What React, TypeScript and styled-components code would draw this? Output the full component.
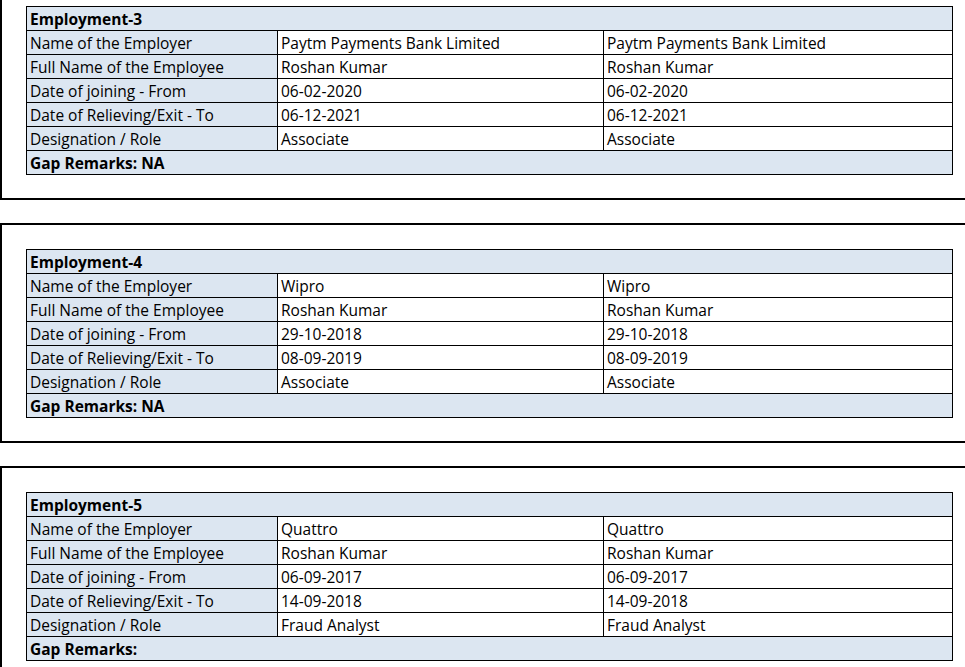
import React from 'react';
import styled, { createGlobalStyle } from 'styled-components';

const GlobalStyle = createGlobalStyle`
  html,
  body {
    margin: 0;
    padding: 0;
    overflow: hidden;
    background: #ffffff;
  }
`;

const Page = styled.main`
  margin-top: -20px;
  font-family: 'Open Sans', 'Noto Sans', sans-serif;
  font-size: 15.5px;
  color: #000000;
`;

const Panel = styled.section`
  border: 2px solid #000000;
  border-right: none;
  padding: 24px 0 23px 24px;
  margin-bottom: 23px;
`;

const Sheet = styled.div`
  display: grid;
  grid-template-columns: 251px 326px 349px;
  width: max-content;
  border-top: 1px solid #000000;
  border-left: 1px solid #000000;
`;

type Tone = 'label' | 'value' | 'title';

const Cell = styled.div<{ $tone: Tone; $wide?: boolean }>`
  box-sizing: border-box;
  height: 24px;
  line-height: 23px;
  padding: 1px 3px 0 3px;
  border-right: 1px solid #000000;
  border-bottom: 1px solid #000000;
  white-space: nowrap;
  overflow: hidden;
  background: ${p => (p.$tone === 'value' ? '#ffffff' : '#dce6f1')};
  font-weight: ${p => (p.$tone === 'title' ? 700 : 400)};
  grid-column: ${p => (p.$wide ? '1 / -1' : 'auto')};
`;

type Employment = {
  index: number;
  employer: string;
  employee: string;
  from: string;
  to: string;
  role: string;
  remarks: string;
};

const employments: Employment[] = [
  {
    index: 3,
    employer: 'Paytm Payments Bank Limited',
    employee: 'Roshan Kumar',
    from: '06-02-2020',
    to: '06-12-2021',
    role: 'Associate',
    remarks: 'NA',
  },
  {
    index: 4,
    employer: 'Wipro',
    employee: 'Roshan Kumar',
    from: '29-10-2018',
    to: '08-09-2019',
    role: 'Associate',
    remarks: 'NA',
  },
  {
    index: 5,
    employer: 'Quattro',
    employee: 'Roshan Kumar',
    from: '06-09-2017',
    to: '14-09-2018',
    role: 'Fraud Analyst',
    remarks: '',
  },
];

const EmploymentBlock = ({ item }: { item: Employment }) => {
  const rows: [string, string][] = [
    ['Name of the Employer', item.employer],
    ['Full Name of the Employee', item.employee],
    ['Date of joining - From', item.from],
    ['Date of Relieving/Exit - To', item.to],
    ['Designation / Role', item.role],
  ];

  return (
    <Panel>
      <Sheet>
        <Cell $tone="title" $wide>
          Employment-{item.index}
        </Cell>
        {rows.map(([label, value]) => (
          <React.Fragment key={label}>
            <Cell $tone="label">{label}</Cell>
            {/* claimed value and verified value */}
            <Cell $tone="value">{value}</Cell>
            <Cell $tone="value">{value}</Cell>
          </React.Fragment>
        ))}
        <Cell $tone="title" $wide>
          Gap Remarks: {item.remarks}
        </Cell>
      </Sheet>
    </Panel>
  );
};

const App = () => (
  <>
    <GlobalStyle />
    <Page>
      {employments.map(item => (
        <EmploymentBlock key={item.index} item={item} />
      ))}
    </Page>
  </>
);

export default App;
